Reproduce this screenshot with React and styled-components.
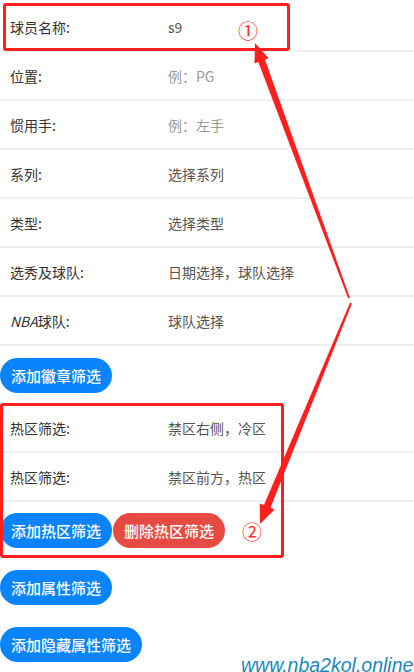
import React from "react";
import styled, { createGlobalStyle } from "styled-components";

const GlobalStyle = createGlobalStyle`
  html, body { margin: 0; padding: 0; background: #fff; }
  body { font-family: "Noto Sans CJK SC", "Noto Sans", sans-serif; }
  * { box-sizing: border-box; }
`;

const Page = styled.div`
  position: relative;
  width: 414px;
  height: 672px;
  overflow: hidden;
  padding-top: 3px;
  background: #fff;
`;

const Row = styled.div`
  display: grid;
  grid-template-columns: 158px 1fr;
  align-items: center;
  height: 49px;
  padding-left: 10px;
  border-bottom: 2px solid #efeff4;
  font-size: 14px;
  line-height: 20px;
`;

const Label = styled.span`
  color: #333;
  white-space: nowrap;
`;

const Value = styled.span`
  color: ${(p) => (p.$placeholder ? "#999" : "#555")};
  white-space: nowrap;
`;

const ButtonRow = styled.div`
  display: flex;
  gap: 1px;
  padding: ${(p) => p.$top || 11}px 0 11px;
`;

const PillButton = styled.button`
  height: 35px;
  padding: 0 11px;
  border: none;
  border-radius: 18px;
  background: ${(p) => (p.$danger ? "#e64b43" : "#0a84fc")};
  color: #fff;
  font-family: "Noto Sans CJK SC", sans-serif;
  font-size: 15px;
  font-weight: 500;
  line-height: 35px;
  cursor: pointer;
`;

const Callout = styled.div`
  position: absolute;
  left: ${(p) => p.$x}px;
  top: ${(p) => p.$y}px;
  width: ${(p) => p.$w}px;
  height: ${(p) => p.$h}px;
  border: 3px solid #ff1f1f;
  border-radius: 3px;
  pointer-events: none;
`;

const Marker = styled.span`
  position: absolute;
  left: ${(p) => p.$x}px;
  top: ${(p) => p.$y}px;
  color: #ff2a2a;
  font-family: "Noto Sans CJK SC", sans-serif;
  font-size: 20px;
  line-height: 20px;
  pointer-events: none;
`;

const Overlay = styled.svg`
  position: absolute;
  left: 0;
  top: 0;
  pointer-events: none;
`;

const Watermark = styled.span`
  position: absolute;
  left: 241px;
  top: 656px;
  color: #1a87bd;
  font-family: "Liberation Sans", Arial, sans-serif;
  font-style: italic;
  font-size: 19.5px;
  line-height: 19.5px;
  white-space: nowrap;
  pointer-events: none;
`;

function arrowPolygon([tx, ty], [px, py], tailW, shaftW, headW, headL) {
  const dx = px - tx;
  const dy = py - ty;
  const len = Math.hypot(dx, dy);
  const ux = dx / len;
  const uy = dy / len;
  const nx = -uy;
  const ny = ux;
  const bx = px - ux * headL;
  const by = py - uy * headL;
  const pts = [
    [tx + (nx * tailW) / 2, ty + (ny * tailW) / 2],
    [bx + (nx * shaftW) / 2, by + (ny * shaftW) / 2],
    [bx + (nx * headW) / 2, by + (ny * headW) / 2],
    [px, py],
    [bx - (nx * headW) / 2, by - (ny * headW) / 2],
    [bx - (nx * shaftW) / 2, by - (ny * shaftW) / 2],
    [tx - (nx * tailW) / 2, ty - (ny * tailW) / 2],
  ];
  return pts.map((p) => p.map((v) => v.toFixed(1)).join(",")).join(" ");
}

const rows = [
  { label: "球员名称:", value: "s9" },
  { label: "位置:", value: "例：PG", placeholder: true },
  { label: "惯用手:", value: "例：左手", placeholder: true },
  { label: "系列:", value: "选择系列" },
  { label: "类型:", value: "选择类型" },
  { label: "选秀及球队:", value: "日期选择，球队选择" },
  { label: <><i>NBA</i>球队:</>, value: "球队选择" },
];

const hotRows = [
  { label: "热区筛选:", value: "禁区右侧，冷区" },
  { label: "热区筛选:", value: "禁区前方，热区" },
];

export default function App() {
  return (
    <>
      <GlobalStyle />
      <Page>
        {rows.map((r, i) => (
          <Row key={i}>
            <Label>{r.label}</Label>
            <Value $placeholder={r.placeholder}>{r.value}</Value>
          </Row>
        ))}
        <ButtonRow $top={12}>
          <PillButton>添加徽章筛选</PillButton>
        </ButtonRow>
        {hotRows.map((r, i) => (
          <Row key={i}>
            <Label>{r.label}</Label>
            <Value>{r.value}</Value>
          </Row>
        ))}
        <ButtonRow>
          <PillButton>添加热区筛选</PillButton>
          <PillButton $danger>删除热区筛选</PillButton>
        </ButtonRow>
        <ButtonRow>
          <PillButton>添加属性筛选</PillButton>
        </ButtonRow>
        <ButtonRow>
          <PillButton>添加隐藏属性筛选</PillButton>
        </ButtonRow>

        <Callout $x={3} $y={3} $w={287} $h={48} />
        <Callout $x={0} $y={403} $w={284} $h={155} />
        <Marker $x={238} $y={21}>①</Marker>
        <Marker $x={242} $y={522}>②</Marker>
        <Overlay width="414" height="672" viewBox="0 0 414 672">
          <polygon
            fill="#ff1f1f"
            points={arrowPolygon([349, 298], [255, 43], 2, 7, 15, 19)}
          />
          <polygon
            fill="#ff1f1f"
            points={arrowPolygon([351, 303], [260, 524], 2, 7, 16, 19)}
          />
        </Overlay>
        <Watermark>www.nba2kol.online</Watermark>
      </Page>
    </>
  );
}
